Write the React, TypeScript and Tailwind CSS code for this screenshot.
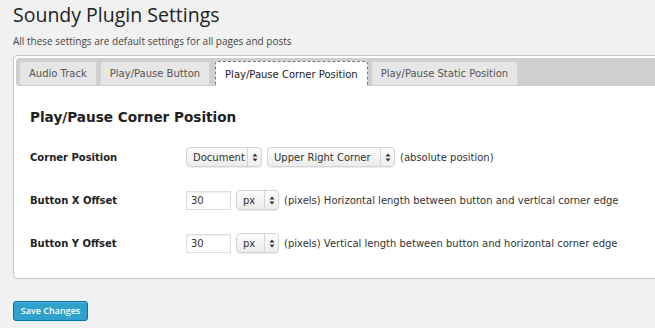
const tabs = ['Audio Track', 'Play/Pause Button', 'Play/Pause Corner Position', 'Play/Pause Static Position'];

function Arrows() {
  return (
    <svg width="6" height="9" viewBox="0 0 6 9" className="text-[#333]">
      <path d="M3 0.5 L5.5 3.5 H0.5 Z" fill="currentColor" />
      <path d="M3 8.5 L5.5 5.5 H0.5 Z" fill="currentColor" />
    </svg>
  );
}

function Select({ value, width }: { value: string; width: string }) {
  return (
    <div
      className={`flex h-[20px] items-stretch whitespace-nowrap rounded-[4px] border border-[#d4d4d4] bg-gradient-to-b from-[#fdfdfd] to-[#ececec] shadow-[0_1px_1px_rgba(0,0,0,0.08)] ${width}`}
    >
      <span className="flex flex-1 items-center pl-[6px] text-[10px] text-[#333]">{value}</span>
      <span className="flex w-[14px] items-center justify-center border-l border-[#d4d4d4]">
        <Arrows />
      </span>
    </div>
  );
}

function Input({ value }: { value: string }) {
  return (
    <div className="flex h-[19px] w-[45px] items-center border border-[#ddd] bg-white pl-[4px] text-[10px] text-[#333] shadow-[inset_0_1px_2px_rgba(0,0,0,0.07)]">
      {value}
    </div>
  );
}

export default function App() {
  return (
    <div className="h-[328px] w-[655px] overflow-hidden bg-[#f1f1f1] pl-[13px] font-['DejaVu_Sans',sans-serif]">
      <h1 className="pt-[2px] font-['Open_Sans',sans-serif] text-[19.5px] leading-[26px] text-[#222]">
        Soundy Plugin Settings
      </h1>
      <p className="mt-[6px] font-['Open_Sans',sans-serif] text-[10px] leading-[14px] text-[#444]">
        All these settings are default settings for all pages and posts
      </p>

      {/* panel */}
      <div className="mt-[7px] w-[700px] rounded-[4px] border border-[#c5c5c5] bg-white p-[2px]">
        <div className="flex gap-[3px] rounded-[3px] border border-[#d0d0d0] bg-[#cfcfcf] px-[2px] pt-[2px]">
          {tabs.map((t, i) =>
            i === 2 ? (
              <div
                key={t}
                className="-mb-[1px] ml-[2px] flex h-[25px] items-center rounded-t-[3px] border border-dashed border-[#777] border-b-0 bg-white px-[9px] text-[10px] text-[#212121]"
              >
                {t}
              </div>
            ) : (
              <div
                key={t}
                className="flex h-[24px] items-center rounded-t-[3px] border border-[#d3d3d3] border-b-0 bg-[#e6e6e6] px-[9px] text-[10px] text-[#555]"
              >
                {t}
              </div>
            )
          )}
        </div>

        <div className="px-[14px] pb-[23px] pt-[22px]">
          <h2 className="text-[13.6px] font-bold leading-[18px] text-[#222]">Play/Pause Corner Position</h2>

          <div className="mt-[21px] flex flex-col gap-[23px]">
            <div className="flex items-center">
              <span className="w-[156px] text-[10px] font-bold text-[#222]">Corner Position</span>
              <div className="flex items-center gap-[5px]">
                <Select value="Document" width="w-[76px]" />
                <Select value="Upper Right Corner" width="w-[128px]" />
                <span className="text-[10px] text-[#333]">(absolute position)</span>
              </div>
            </div>
            <div className="flex items-center">
              <span className="w-[156px] text-[10px] font-bold text-[#222]">Button X Offset</span>
              <div className="flex items-center gap-[5px]">
                <Input value="30" />
                <Select value="px" width="w-[43px]" />
                <span className="text-[10px] text-[#333]">
                  (pixels) Horizontal length between button and vertical corner edge
                </span>
              </div>
            </div>
            <div className="flex items-center">
              <span className="w-[156px] text-[10px] font-bold text-[#222]">Button Y Offset</span>
              <div className="flex items-center gap-[5px]">
                <Input value="30" />
                <Select value="px" width="w-[43px]" />
                <span className="text-[10px] text-[#333]">
                  (pixels) Vertical length between button and horizontal corner edge
                </span>
              </div>
            </div>
          </div>
        </div>
      </div>

      <button className="mt-[22px] flex h-[20px] w-[75px] items-center justify-center rounded-[3px] border border-[#0074a2] bg-[#2ea2cc] font-['Open_Sans',sans-serif] text-[9px] font-semibold text-white shadow-[inset_0_1px_0_rgba(120,200,230,0.5)]">
        Save Changes
      </button>
    </div>
  );
}
